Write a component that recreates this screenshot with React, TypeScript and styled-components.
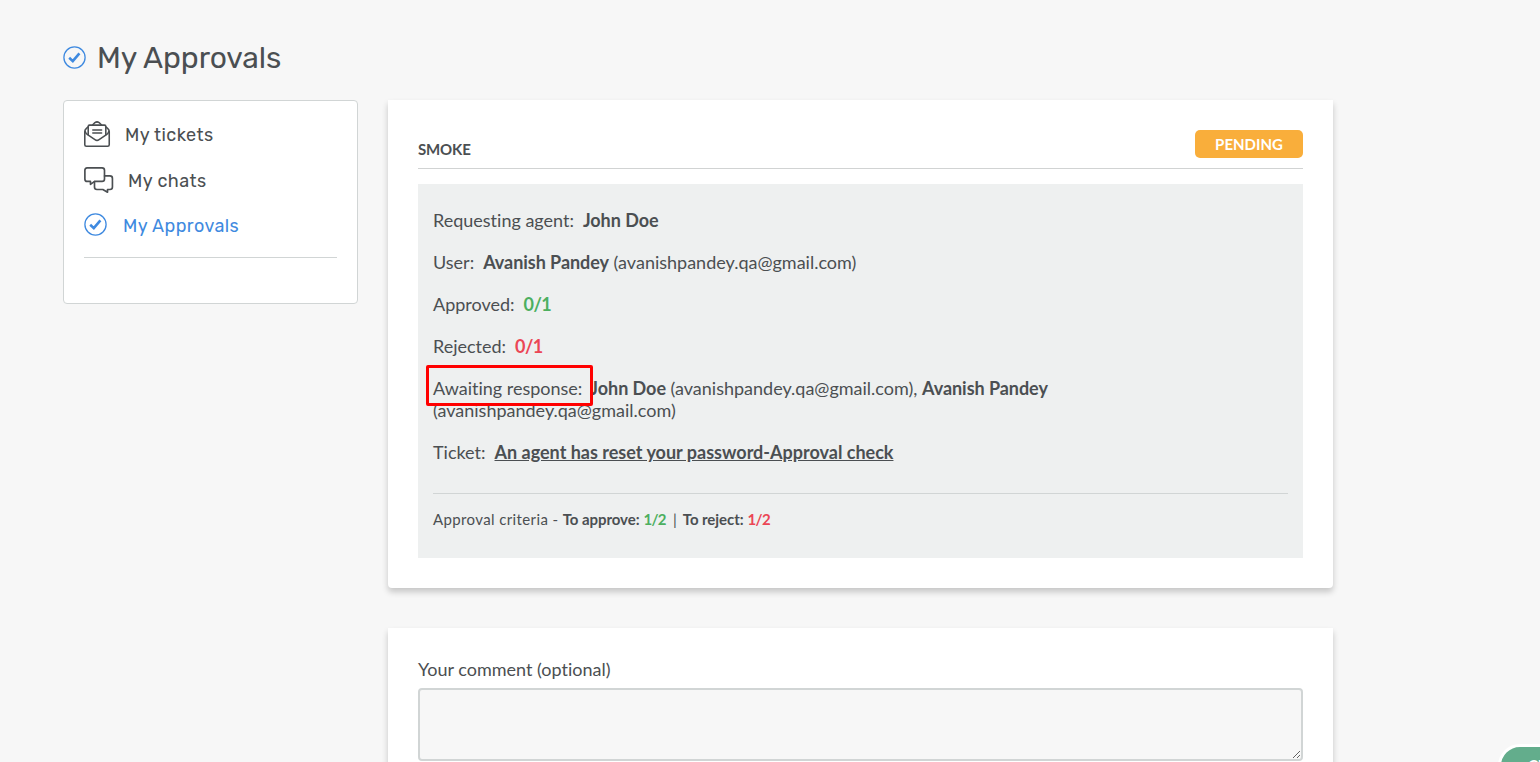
import React from 'react';
import styled, { createGlobalStyle } from 'styled-components';

const Global = createGlobalStyle`
  *, *::after { box-sizing: border-box; }
  body {
    margin: 0;
    background: #f7f7f7;
    color: #4b4f52;
    font-family: Lato, sans-serif;
    font-size: 18px;
    line-height: 22px;
    font-variant-ligatures: none;
    overflow: hidden;
  }
`;

const Page = styled.div`
  height: 762px;
  padding: 40px 207px 0 63px;
  overflow: hidden;
`;

const Heading = styled.h1`
  display: flex;
  align-items: center;
  gap: 11px;
  height: 36px;
  margin: 0 0 24px;
  font: 400 30px/36px Rubik, Roboto, sans-serif;
  letter-spacing: -0.05px;
  svg { margin-bottom: 2px; }
`;

const Columns = styled.div`
  display: grid;
  grid-template-columns: 295px 945px;
  column-gap: 30px;
  align-items: start;
`;

const Sidebar = styled.nav`
  height: 204px;
  padding: 18px 20px;
  background: #fff;
  border: 1px solid #d1d5d5;
  border-radius: 4px;
`;

const NavList = styled.div`
  display: flex;
  flex-direction: column;
  height: 139px;
  border-bottom: 1px solid #d1d5d5;
`;

const NavItem = styled.a<{ $gap: number; $active?: boolean }>`
  display: flex;
  align-items: center;
  gap: ${(p) => p.$gap}px;
  height: ${(p) => (p.$active ? 30 : 32)}px;
  margin-bottom: ${(p) => (p.$active ? 0 : 14)}px;
  color: ${(p) => (p.$active ? '#3f8ae0' : '#4b4f52')};
  font: 400 18px/32px Rubik, Roboto, sans-serif;
  letter-spacing: 0.44px;
  svg { flex: none; margin-bottom: ${(p) => (p.$active ? 3 : 2)}px; }
`;

const Main = styled.main`
  display: flex;
  flex-direction: column;
  gap: 40px;
`;

const Card = styled.section<{ $height: number }>`
  height: ${(p) => p.$height}px;
  padding: 30px;
  background: #fff;
  border-radius: 0 0 4px 4px;
  box-shadow: 0 4px 6px rgba(0, 0, 0, 0.2);
`;

const CardHeader = styled.header`
  display: flex;
  justify-content: space-between;
  height: 39px;
  margin-bottom: 15px;
  border-bottom: 1px solid #d1d3d3;
`;

const Title = styled.h2`
  margin: 8px 0 0;
  font-size: 15px;
  line-height: 22px;
  font-weight: 700;
  letter-spacing: -0.15px;
`;

const Status = styled.span`
  width: 108px;
  height: 28px;
  border-radius: 5px;
  background: #f9ae3b;
  color: #fff;
  font-size: 15px;
  font-weight: 700;
  line-height: 29px;
  text-align: center;
`;

const Details = styled.div`
  height: 374px;
  padding: 25px 15px 0;
  background: #eef0f0;
`;

const Row = styled.p`
  width: 640px;
  margin: 0 0 20px;
`;

const Label = styled.span`
  margin-right: 9px;
`;

const MarkedLabel = styled(Label)`
  position: relative;
  margin-right: 8px;
  &::after {
    content: '';
    position: absolute;
    left: -7px;
    top: -12px;
    width: 167px;
    height: 41px;
    border: 3px solid #f00;
    border-radius: 2px;
    z-index: 1;
  }
`;

const Strong = styled.strong<{ $tone?: string }>`
  color: ${(p) => p.$tone || 'inherit'};
  font-weight: 700;
  letter-spacing: ${(p) => (p.$tone ? -0.6 : -0.05)}px;
`;

const TicketLink = styled.a`
  font-weight: 700;
  text-decoration: underline;
`;

const Criteria = styled.div`
  margin-top: 30px;
  padding-top: 14px;
  border-top: 1px solid #d1d5d5;
  font-size: 15px;
`;

const CriteriaLabel = styled.span`
  letter-spacing: 0.38px;
`;

const Divider = styled.span`
  margin: 0 6px 0 7px;
`;

const CommentLabel = styled.label`
  display: block;
  margin-bottom: 8px;
`;

const Comment = styled.textarea`
  display: block;
  width: 885px;
  height: 73px;
  background: #f7f7f7;
  border: 2px solid #d1d5d5;
  border-radius: 4px;
  resize: vertical;
  outline: none;
`;

const ChatButton = styled.button`
  position: fixed;
  left: 1498px;
  top: 744px;
  width: 100px;
  height: 50px;
  padding: 9px 0 0 27px;
  border: 3px solid #fff;
  border-radius: 22px;
  background: #63ad8c;
  color: #fff;
  font: 700 15px/18px Lato, sans-serif;
  text-align: left;
  display: flex;
  align-items: flex-start;
`;

const green = '#4caf5f';
const red = '#eb4655';

const CheckIcon = () => (
  <svg width="23" height="23" viewBox="0 0 23 23" fill="none" stroke="#3f8ae0">
    <circle cx="11.5" cy="11.5" r="10.6" strokeWidth="1.3" />
    <path d="M6.2 11.8l3.6 3.3 6.6-7.8" strokeWidth="2.6" />
  </svg>
);

const MailIcon = () => (
  <svg width="27" height="27" viewBox="0 0 27.6 27.6" fill="none" stroke="#4b4f52" strokeWidth="1.6" strokeLinejoin="round" strokeLinecap="round">
    <path d="M4.3 6.1L2.5 7.5Q.8 8.8.8 11v13.2q0 1.6 1.6 1.6h21.8q1.6 0 1.6-1.6V11q0-2.2-1.7-3.5l-1.8-1.4" />
    <path d="M4.3 14V5.5q0-1.3 1.3-1.3h15.4q1.3 0 1.3 1.3V14" />
    <path d="M9 3.9l2.2-2.3q2.1-1.5 4.2 0L17.7 3.9" />
    <path d="M1.2 10.6Q1.7 12.8 4 14.2l7.2 4.9q2.100 1.500 4.200 0l7.200-4.900q2.300-1.400 2.800-3.600" />
    <path d="M9 9.200h9M9 12.300h9" />
  </svg>
);

const ChatsIcon = () => (
  <svg width="30" height="27" viewBox="0 0 30.6 27.5" fill="none" stroke="#4b4f52" strokeWidth="1.7" strokeLinejoin="round" strokeLinecap="round">
    <path d="M3.2.9h15.2q2.500 0 2.500 2.500v8.800q0 2.500-2.500 2.500h-7.600L6.600 17.700v-3H3.200q-2.300 0-2.300-2.500V3.400q0-2.500 2.300-2.500z" />
    <path d="M21 9.100h5.500q2.500 0 2.500 2.500v8.800q0 2.500-2.500 2.500H24v2.800l-4.800-2.800h-6q-2.500 0-2.500-2.500v-5.500" />
  </svg>
);

export default function App() {
  return (
    <Page>
      <Global />
      <Heading><CheckIcon />My Approvals</Heading>
      <Columns>
        <Sidebar>
          <NavList>
            <NavItem $gap={14}><MailIcon />My tickets</NavItem>
            <NavItem $gap={14}><ChatsIcon />My chats</NavItem>
            <NavItem $gap={16} $active><CheckIcon />My Approvals</NavItem>
          </NavList>
        </Sidebar>
        <Main>
          <Card $height={488}>
            <CardHeader>
              <Title>SMOKE</Title>
              <Status>PENDING</Status>
            </CardHeader>
            <Details>
              <Row><Label>Requesting agent:</Label><Strong>John Doe</Strong></Row>
              <Row><Label>User:</Label><Strong>Avanish Pandey</Strong> (avanishpandey.qa@gmail.com)</Row>
              <Row><Label>Approved:</Label><Strong $tone={green}>0/1</Strong></Row>
              <Row><Label>Rejected:</Label><Strong $tone={red}>0/1</Strong></Row>
              <Row>
                <MarkedLabel>Awaiting response:</MarkedLabel><Strong>John Doe</Strong> (avanishpandey.qa@gmail.com), <Strong>Avanish Pandey</Strong> (avanishpandey.qa@gmail.com)
              </Row>
              <Row><Label>Ticket:</Label><TicketLink>An agent has reset your password-Approval check</TicketLink></Row>
              <Criteria>
                <CriteriaLabel>Approval criteria - </CriteriaLabel><Strong>To approve:</Strong> <Strong $tone={green}>1/2</Strong>
                <Divider>|</Divider>
                <Strong>To reject:</Strong> <Strong $tone={red}>1/2</Strong>
              </Criteria>
            </Details>
          </Card>
          <Card $height={240}>
            <CommentLabel htmlFor="comment">Your comment (optional)</CommentLabel>
            <Comment id="comment" />
          </Card>
        </Main>
      </Columns>
      <ChatButton>Chat</ChatButton>
    </Page>
  );
}
